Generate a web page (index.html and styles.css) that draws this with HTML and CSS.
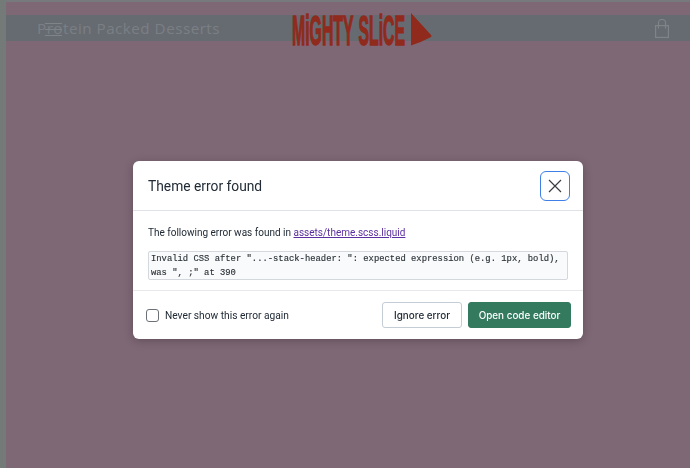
FILE: index.html
```html
<!DOCTYPE html>
<html lang="en">
<head>
  <meta charset="UTF-8" />
  <title>Theme error found</title>
  <link rel="stylesheet" href="styles.css">
</head>
<body>
  <div class="page">
    <div class="page-strip"></div>
    <header class="site-header">
      <div class="site-band">
        <div class="announce">Protein Packed Desserts</div>
        <div class="menu-icon"></div>
        <svg class="bag-icon" width="14" height="19" viewBox="0 0 14 19" fill="none" stroke="#7f8488" stroke-width="1.2">
          <rect x="0.600" y="6.600" width="12.800" height="11.800" />
          <path d="M3.500 9.500V3.500a3.500 3 0 0 1 7 0v6" />
        </svg>
      </div>
      <div class="logo">
        <span class="logo-text">MiGHTY SLiCE</span>
        <svg class="logo-slice" width="22" height="33" viewBox="0 0 22 33">
          <path d="M1 0L21.500 22.500Q21.800 24 20 24.600Q10 30 1 32.500Z" fill="#8f2a1c" />
        </svg>
      </div>
    </header>
  </div>

  <!-- Error modal -->
  <div class="overlay">
    <div class="modal">
      <div class="modal-header">
        <h3>Theme error found</h3>
        <button class="close-btn">
          <svg width="14" height="14" viewBox="0 0 14 14" stroke="#3a3d40" stroke-width="1.2">
            <path d="M1 1l12 12M13 1L1 13" />
          </svg>
        </button>
      </div>
      <div class="modal-body">
        <p>The following error was found in <a href="#">assets/theme.scss.liquid</a></p>
        <div class="error-box">Invalid CSS after "...-stack-header: ": expected expression (e.g. 1px, bold), was ", ;" at 390</div>
      </div>
      <div class="modal-footer">
        <label class="never-show">
          <span class="checkbox"></span>
          Never show this error again
        </label>
        <div class="actions">
          <button class="btn">Ignore error</button>
          <button class="btn btn-primary">Open code editor</button>
        </div>
      </div>
    </div>
  </div>
</body>
</html>
```

FILE: styles.css
```css
* {
  margin: 0; padding: 0; box-sizing: border-box;
}
body {
  width: 690px;
  height: 468px;
  overflow: hidden;
  background-color: #737a78;
  font-family: Roboto, "Liberation Sans", sans-serif;
}

.page {
  margin-left: 6px;
  height: 468px;
  background-color: #7f6876;
}
.page-strip {
  height: 2px;
  background-color: #777a7c;
}

.site-header {
  position: relative;
  padding-top: 13px;
}
.site-band {
  height: 26px;
  background-color: #666b72;
  display: flex;
  align-items: center;
  padding-left: 31px;
  padding-right: 21px;
}
.announce {
  font-family: "Open Sans", "Liberation Sans", sans-serif;
  font-size: 15.200px;
  letter-spacing: 0.5px;
  color: #7b7f84;
}
.menu-icon {
  position: absolute;
  left: 39px;
  top: 21px;
  width: 17px;
  height: 13px;
  border-top: 1px solid #7f8488;
  border-bottom: 1px solid #7f8488;
}
.menu-icon::after {
  content: "";
  display: block;
  margin-top: 4.500px;
  height: 1px;
  background-color: #7f8488;
}
.bag-icon {
  margin-left: auto;
}

.logo {
  position: absolute;
  left: 286px;
  top: 12px;
  width: 140px;
  height: 34px;
}
.logo-text {
  position: absolute;
  left: 0;
  top: 0;
  font-family: "Liberation Sans", sans-serif;
  font-weight: bold;
  font-size: 42px;
  line-height: 34px;
  word-spacing: 2px;
  white-space: nowrap;
  color: #8f2a1c;
  -webkit-text-stroke: 1.400px #8f2a1c;
  transform: scaleX(0.377);
  transform-origin: left top;
}
.logo-slice {
  position: absolute;
  left: 118px;
  top: -1px;
}

.overlay {
  position: fixed;
  top: 0; left: 0;
  width: 100%; height: 100%;
  display: flex;
  justify-content: center;
  align-items: center;
  padding-left: 26px;
  padding-top: 32px;
}
.modal {
  width: 450px;
  height: 178px;
  background: #ffffff;
  border-radius: 6px;
  box-shadow: 0 2px 10px rgba(0, 0, 0, 0.25);
  color: #212b36;
}

.modal-header {
  height: 50px;
  padding: 0 13px 0 15px;
  display: flex;
  justify-content: space-between;
  align-items: center;
  border-bottom: 1px solid #dfe3e8;
}
.modal-header h3 {
  font-size: 13.800px;
  font-weight: 400;
}
.close-btn {
  width: 30px;
  height: 30px;
  background: #fff;
  border: 1.500px solid #3f7fe8;
  border-radius: 6px;
  display: flex;
  justify-content: center;
  align-items: center;
}

.modal-body {
  height: 80px;
  padding: 15px 15px 0;
  border-bottom: 1px solid #e6e8eb;
}
.modal-body p {
  font-size: 10px;
  line-height: 14px;
}
.modal-body a {
  color: #5c2fa0;
}
.error-box {
  margin-top: 11px;
  height: 29px;
  padding: 0 2px;
  background-color: #f9fafb;
  border: 1px solid #d4d8dc;
  border-radius: 2px;
  font-family: "Liberation Mono", monospace;
  font-size: 8.850px;
  line-height: 14px;
  color: #2c3238;
  -webkit-text-stroke: 0.15px #2c3238;
}

.modal-footer {
  height: 48px;
  padding: 0 12px 0 13px;
  display: flex;
  justify-content: space-between;
  align-items: center;
}
.never-show {
  display: flex;
  align-items: center;
  gap: 6px;
  font-size: 10.200px;
}
.checkbox {
  width: 13px;
  height: 13px;
  background: #fff;
  border: 1px solid #6b7177;
  border-radius: 3px;
}
.actions {
  display: flex;
  gap: 6px;
}
.btn {
  height: 26px;
  width: 80px;
  background: #fff;
  border: 1px solid #c4cdd5;
  border-radius: 3px;
  font-family: Inter, "Liberation Sans", sans-serif;
  font-size: 9.900px;
  font-weight: 500;
  color: #212b36;
}
.btn-primary {
  width: 103px;
  background-color: #337a5f;
  border-color: #337a5f;
  color: #ffffff;
}
```
